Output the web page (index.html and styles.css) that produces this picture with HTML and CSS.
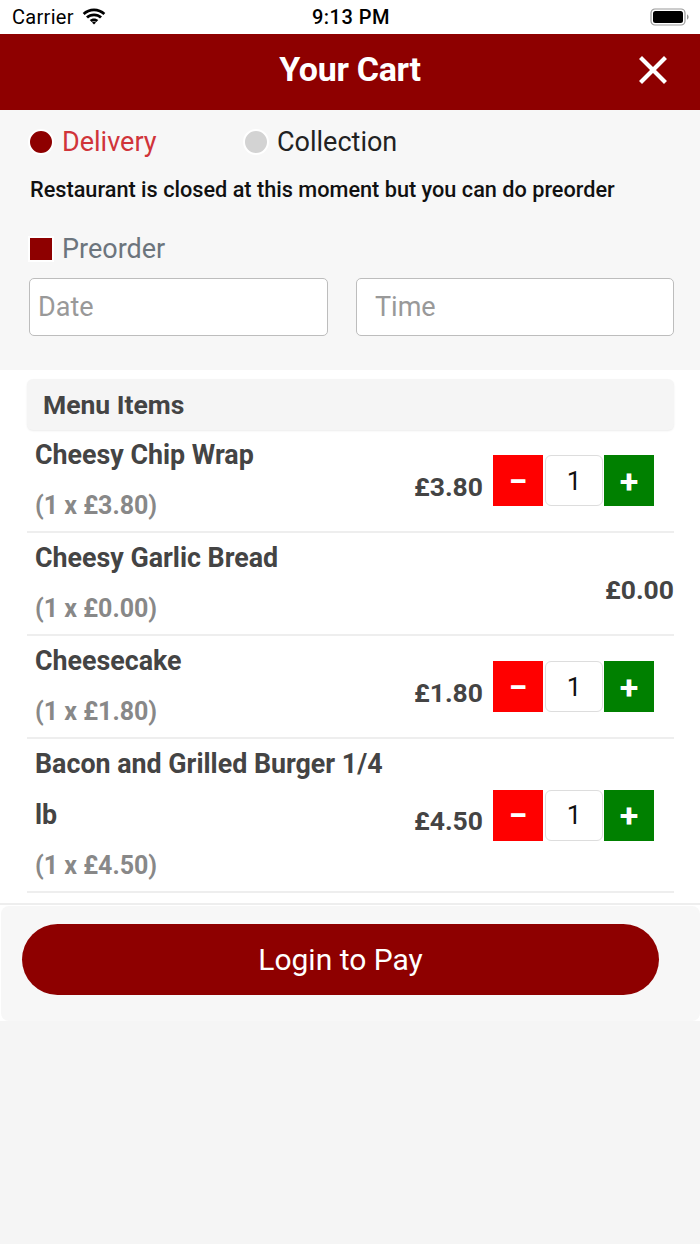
FILE: index.html
```html
<!DOCTYPE html>
<html>
<head>
<meta charset="utf-8">
<link rel="stylesheet" href="styles.css">
</head>
<body>
<div class="statusbar">
  <div class="sb-left">Carrier
    <svg class="wifi" width="24" height="17" viewBox="0 0 24 17"><path d="M12 3.2c3.6 0 6.9 1.4 9.4 3.7l1.9-2C20.3 2.1 16.3.4 12 .4S3.7 2.1.7 4.9l1.9 2C5.1 4.6 8.4 3.2 12 3.2z" fill="#000"/><path d="M12 8.2c2.3 0 4.4.9 6 2.3l2-2C17.8 6.6 15 5.4 12 5.4s-5.8 1.2-8 3.1l2 2c1.6-1.4 3.7-2.3 6-2.3z" fill="#000"/><path d="M12 13.2c.9 0 1.7.3 2.3.9l2-2c-1.1-1-2.6-1.7-4.3-1.7s-3.2.7-4.3 1.7l2 2c.6-.6 1.4-.9 2.3-.9z" fill="#000"/><path d="M12 16.6l2-2c-.5-.5-1.2-.8-2-.8s-1.5.3-2 .8z" fill="#000"/></svg>
  </div>
  <div class="sb-time">9:13 PM</div>
  <div class="sb-right">
    <svg width="40" height="18" viewBox="0 0 40 18"><rect x="1" y="1" width="34" height="16" rx="4" fill="none" stroke="#999" stroke-width="1.2"/><rect x="3" y="3" width="30" height="12" rx="2.5" fill="#000"/><path d="M37 6.5v5c1-.3 1.6-1.3 1.6-2.5S38 6.8 37 6.5z" fill="#999"/></svg>
  </div>
</div>

<header class="topbar">
  <h1>Your Cart</h1>
  <svg class="close" width="28" height="28" viewBox="0 0 28 28"><path d="M3 3L25 25M25 3L3 25" stroke="#fff" stroke-width="4.2" stroke-linecap="square"/></svg>
</header>

<section class="options">
  <div class="radios">
    <label class="radio active"><span class="dot"></span>Delivery</label>
    <label class="radio"><span class="dot"></span>Collection</label>
  </div>
  <p class="notice">Restaurant is closed at this moment but you can do preorder</p>
  <label class="check"><span class="box"></span>Preorder</label>
  <div class="inputs">
    <div class="field date">Date</div>
    <div class="field time">Time</div>
  </div>
</section>

<section class="cart">
  <div class="cart-head">Menu Items</div>
  <div class="item">
    <div class="info">
      <div class="name">Cheesy Chip Wrap</div>
      <div class="sub">(1 x £3.80)</div>
    </div>
    <div class="price">£3.80</div>
    <div class="qty"><span class="minus">−</span><span class="num">1</span><span class="plus">+</span></div>
  </div>
  <div class="item">
    <div class="info">
      <div class="name">Cheesy Garlic Bread</div>
      <div class="sub">(1 x £0.00)</div>
    </div>
    <div class="price solo">£0.00</div>
  </div>
  <div class="item">
    <div class="info">
      <div class="name">Cheesecake</div>
      <div class="sub">(1 x £1.80)</div>
    </div>
    <div class="price">£1.80</div>
    <div class="qty"><span class="minus">−</span><span class="num">1</span><span class="plus">+</span></div>
  </div>
  <div class="item">
    <div class="info">
      <div class="name">Bacon and Grilled Burger 1/4<br>lb</div>
      <div class="sub">(1 x £4.50)</div>
    </div>
    <div class="price">£4.50</div>
    <div class="qty"><span class="minus">−</span><span class="num">1</span><span class="plus">+</span></div>
  </div>
</section>

<footer class="footer">
  <div class="footer-card">
    <button class="pay">Login to Pay</button>
  </div>
</footer>
</body>
</html>
```

FILE: styles.css
```css
* { box-sizing: border-box; }
html, body { margin: 0; padding: 0; }
body {
  width: 700px;
  min-height: 1244px;
  background: #f5f5f5;
  font-family: Roboto, "Liberation Sans", sans-serif;
}

.statusbar {
  height: 34px;
  background: #fff;
  display: flex;
  align-items: center;
  justify-content: space-between;
  padding: 0 10px 0 12px;
}
.sb-left {
  display: flex;
  align-items: center;
  gap: 8px;
  font-size: 20px;
  letter-spacing: 0.3px;
  color: #000;
  width: 160px;
}
.sb-left .wifi { margin-top: -2px; }
.sb-time {
  font-size: 20px;
  font-weight: 500;
  letter-spacing: 0.5px;
  color: #000;
}
.sb-right {
  width: 160px;
  display: flex;
  justify-content: flex-end;
}

.topbar {
  height: 76px;
  background: #8e0000;
  display: flex;
  align-items: center;
  justify-content: center;
  padding-bottom: 7px;
  position: relative;
}
.topbar h1 {
  margin: 0;
  color: #fff;
  font-size: 34px;
  font-weight: 700;
  letter-spacing: -0.3px;
}
.close {
  position: absolute;
  right: 33px;
  top: 22px;
}

.options {
  background: #f7f7f7;
  padding: 16px 26px 34px 28px;
}
.radios {
  display: flex;
  align-items: center;
  height: 32px;
}
.radio {
  display: flex;
  align-items: center;
  font-size: 27px;
  color: #222;
}
.radio.active { color: #d0343a; width: 215px; }
.radio .dot {
  width: 26px;
  height: 26px;
  border-radius: 50%;
  border: 2px solid #fff;
  background: #d3d3d3;
  margin-right: 8px;
}
.radio.active .dot { background: #8e0000; }

.notice {
  margin: 19px 0 0 2px;
  font-size: 21.7px;
  font-weight: 500;
  color: #111;
  line-height: 26px;
  white-space: nowrap;
}
.check {
  display: flex;
  align-items: center;
  margin-top: 31px;
  font-size: 27px;
  color: #6c757d;
  height: 30px;
}
.check .box {
  width: 26px;
  height: 26px;
  border: 2px solid #fff;
  background: #8e0000;
  margin-right: 8px;
}
.inputs {
  display: flex;
  gap: 28px;
  margin-top: 14px;
}
.field {
  height: 58px;
  background: #fff;
  border: 1px solid #bdbdbd;
  border-radius: 5px;
  font-size: 27px;
  color: #999;
  display: flex;
  align-items: center;
}
.field.date { width: 299px; margin-left: 1px; padding-left: 8px; }
.field.time { width: 318px; padding-left: 18px; }

.cart {
  background: #fff;
  padding: 9px 26px 10px 27px;
}
.cart-head {
  height: 51px;
  background: #f5f5f5;
  border-radius: 6px;
  box-shadow: 0 1px 2px rgba(0,0,0,0.08);
  font-size: 26.5px;
  font-weight: 700;
  color: #444;
  padding-left: 16px;
  display: flex;
  align-items: center;
}
.item {
  display: flex;
  align-items: center;
  border-bottom: 2px solid #eee;
  padding-left: 8px;
}
.item .info { flex: 1; }
.item .name, .item .sub {
  font-size: 26.8px;
  font-weight: 700;
  line-height: 51px;
  color: #444;
}
.item .sub { color: #888; line-height: 50px; font-size: 25px; }
.price {
  font-size: 26.5px;
  font-weight: 700;
  color: #444;
  margin-top: 11px;
  margin-right: 10px;
}
.price.solo { margin-right: 0; }
.qty {
  display: flex;
  align-items: center;
  margin-right: 20px;
}
.qty span {
  height: 51px;
  display: flex;
  align-items: center;
  justify-content: center;
}
.minus, .plus {
  width: 50px;
  color: #fff;
  font-size: 34px;
  font-weight: 700;
}
.minus { background: #ff0000; }
.plus { background: #008000; }
.num {
  width: 58px;
  margin: 0 1px 0 2px;
  border: 1px solid #ddd;
  border-radius: 6px;
  background: #fff;
  font-size: 26px;
  color: #111;
}

.footer {
  background: #fff;
  border-top: 2px solid #eee;
  padding: 1px 0 0 1px;
}
.footer-card {
  background: #f7f7f7;
  border-radius: 8px;
  padding: 18px 41px 26px 21px;
}
.pay {
  display: block;
  width: 100%;
  height: 71px;
  border: none;
  border-radius: 36px;
  background: #8e0000;
  color: #fff;
  font-family: Roboto, "Liberation Sans", sans-serif;
  font-size: 30px;
  font-weight: 400;
}
```
